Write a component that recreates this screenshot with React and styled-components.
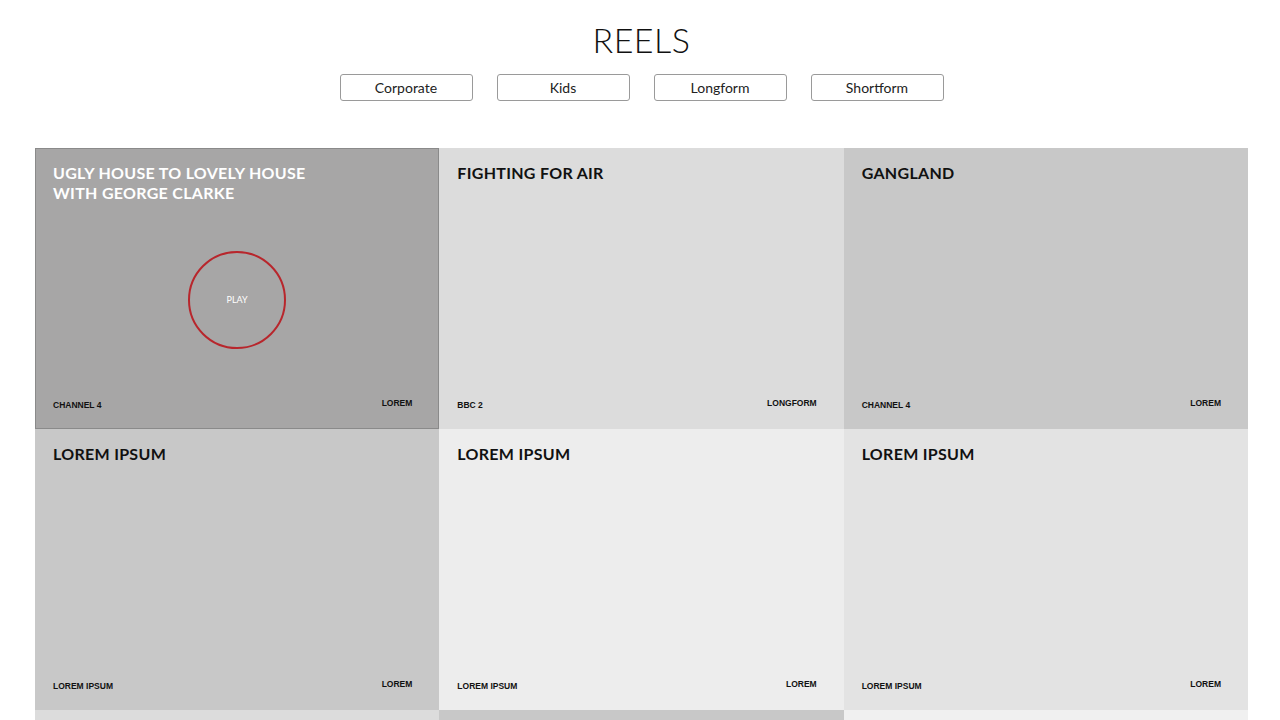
import styled, { createGlobalStyle } from 'styled-components';

const GlobalStyle = createGlobalStyle`
  body {
    margin: 0;
    background: #ffffff;
    font-family: Lato, "Liberation Sans", sans-serif;
    color: #111;
  }
`;

const reels = [
  { title: 'Ugly House to Lovely House with George Clarke', channel: 'Channel 4', tag: 'Lorem', bg: '#a7a6a6', active: true },
  { title: 'Fighting for Air', channel: 'BBC 2', tag: 'Longform', bg: '#dcdcdc' },
  { title: 'Gangland', channel: 'Channel 4', tag: 'Lorem', bg: '#c8c8c8' },
  { title: 'Lorem Ipsum', channel: 'Lorem Ipsum', tag: 'Lorem', bg: '#c8c8c8' },
  { title: 'Lorem Ipsum', channel: 'Lorem Ipsum', tag: 'Lorem', bg: '#ededed' },
  { title: 'Lorem Ipsum', channel: 'Lorem Ipsum', tag: 'Lorem', bg: '#e3e3e3' },
  { title: 'Lorem Ipsum', channel: 'Lorem Ipsum', tag: 'Lorem', bg: '#dcdcdc' },
  { title: 'Lorem Ipsum', channel: 'Lorem Ipsum', tag: 'Lorem', bg: '#c8c8c8' },
  { title: 'Lorem Ipsum', channel: 'Lorem Ipsum', tag: 'Lorem', bg: '#f0f0f0' },
];

const filters = ['Corporate', 'Kids', 'Longform', 'Shortform'];

const App = () => (
  <>
    <GlobalStyle />
    <Page>
      <Header>
        <Title>REELS</Title>
        <FilterBar>
          {filters.map((f) => (
            <FilterButton key={f}>{f}</FilterButton>
          ))}
        </FilterBar>
      </Header>
      <Grid>
        {reels.map((r, i) => (
          <Card key={i} $bg={r.bg} $active={r.active}>
            <CardTitle $light={r.active}>{r.title}</CardTitle>
            <CardBody>
              {r.active && <PlayButton>Play</PlayButton>}
            </CardBody>
            <CardFooter>
              <Label>{r.channel}</Label>
              <Label $raised>{r.tag}</Label>
            </CardFooter>
          </Card>
        ))}
      </Grid>
    </Page>
  </>
);

export default App;

const Page = styled.main`
  height: 720px;
  overflow: hidden;
`;

const Header = styled.header`
  display: flex;
  flex-direction: column;
  align-items: center;
  padding: 20px 0 0 3px;
`;

const Title = styled.h1`
  margin: 0;
  font-family: Lato, "Liberation Sans", sans-serif;
  font-weight: 300;
  font-size: 34px;
  line-height: 40px;
  letter-spacing: 0.5px;
  color: #111;
`;

const FilterBar = styled.nav`
  display: flex;
  gap: 24px;
  margin-top: 14px;
`;

const FilterButton = styled.button`
  width: 133px;
  height: 27px;
  padding: 0;
  background: #fff;
  border: 1px solid #9a9a9a;
  border-radius: 3px;
  font-family: Lato, "Liberation Sans", sans-serif;
  font-size: 14px;
  color: #222;
  cursor: pointer;
`;

const Grid = styled.section`
  display: grid;
  grid-template-columns: repeat(3, 1fr);
  grid-auto-rows: 281px;
  width: 1213px;
  margin: 47px 0 0 35px;
`;

const Card = styled.article`
  display: flex;
  flex-direction: column;
  background: ${(p) => p.$bg};
  border: 1px solid ${(p) => (p.$active ? '#8a8a8a' : 'transparent')};
  padding: 14px 26px 18px 17px;
  box-sizing: border-box;
`;

const CardTitle = styled.h2`
  margin: 0;
  max-width: 270px;
  font-family: Lato, "Liberation Sans", sans-serif;
  font-weight: 700;
  font-size: 16px;
  line-height: 20px;
  text-transform: uppercase;
  letter-spacing: 0.3px;
  color: ${(p) => (p.$light ? '#ffffff' : '#111111')};
`;

const CardBody = styled.div`
  flex: 1;
  display: flex;
  align-items: center;
  justify-content: center;
  padding: 0 0 4px 9px;
`;

const PlayButton = styled.div`
  width: 98px;
  height: 98px;
  border-radius: 50%;
  border: 2px solid #b8262c;
  box-sizing: border-box;
  display: flex;
  align-items: center;
  justify-content: center;
  font-family: Lato, "Liberation Sans", sans-serif;
  font-size: 9px;
  color: #fff;
  text-transform: uppercase;
`;

const CardFooter = styled.div`
  display: flex;
  justify-content: space-between;
  align-items: flex-end;
`;

const Label = styled.span`
  font-family: "Liberation Sans Narrow", "Liberation Sans", sans-serif;
  font-weight: 700;
  font-size: 8.5px;
  text-transform: uppercase;
  color: #111;
  transform: ${(p) => (p.$raised ? 'translateY(-2px)' : 'none')};
`;
